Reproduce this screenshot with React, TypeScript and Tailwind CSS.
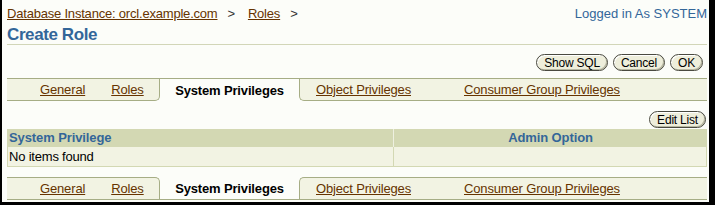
const linkCls = "text-[#663300] underline underline-offset-[1px]";
const lineCls = "border-[#a6ad85]";

function TabBar({ bottom }: { bottom?: boolean }) {
  return (
    <div
      className={`flex h-[23px] text-[13px] tracking-[-0.15px] ${lineCls} ${
        bottom ? "border-b" : "border-t"
      }`}
    >
      <div
        className={`flex w-[153px] items-center bg-[#f2f3e3] pl-[33px] border-r ${lineCls} ${
          bottom ? "border-t rounded-tr-[5px]" : "border-b rounded-br-[5px]"
        }`}
      >
        <a className={linkCls}>General</a>
        <a className={`${linkCls} ml-[26px]`}>Roles</a>
      </div>
      <div className="flex w-[139px] items-center justify-center pt-[1px] font-bold text-black">
        System Privileges
      </div>
      <div
        className={`flex flex-1 items-center bg-[#f2f3e3] pl-[16px] border-l ${lineCls} ${
          bottom ? "border-t rounded-tl-[5px]" : "border-b rounded-bl-[5px]"
        }`}
      >
        <a className={linkCls}>Object Privileges</a>
        <a className={`${linkCls} ml-[53px]`}>Consumer Group Privileges</a>
      </div>
    </div>
  );
}

function Btn({ label }: { label: string }) {
  return (
    <button className="flex h-[17px] items-center rounded-full border border-[#4a4a40] bg-[#eeeedb] px-[7px] text-[12px] leading-none tracking-[-0.2px] text-black shadow-[inset_-1px_-1px_0_#b8b8a2,inset_1px_1px_0_#ffffff]">
      {label}
    </button>
  );
}

export default function App() {
  return (
    <div className="h-[205px] w-[715px] bg-black pb-[3px] pl-[2px] pr-[6px] font-['Liberation_Sans',Arial,sans-serif]">
      <div className="h-full bg-[#fcfdf9] pl-[5px] pr-[2px] pt-[6px]">
        <div className="flex justify-between text-[13px] leading-[15px]">
          <div className="flex tracking-[-0.2px]">
            <a className={linkCls}>Database Instance: orcl.example.com</a>
            <span className="ml-[10px] text-[#333]">&gt;</span>
            <a className={`${linkCls} ml-[13px]`}>Roles</a>
            <span className="ml-[10px] text-[#333]">&gt;</span>
          </div>
          <span className="text-[#336699]">Logged in As SYSTEM</span>
        </div>

        <div className="mt-[5px] border-b border-[#d2d6b8] text-[17px] font-bold leading-[18px] tracking-[-0.4px] text-[#336699]">
          Create Role
        </div>

        <div className="mt-[9px] mr-[4px] flex justify-end gap-[5px]">
          <Btn label="Show SQL" />
          <Btn label="Cancel" />
          <Btn label="OK" />
        </div>

        <div className="mt-[7px]">
          <TabBar />
        </div>

        <div className="mt-[10px] mr-[1px] flex justify-end">
          <Btn label="Edit List" />
        </div>

        <div className="mt-[1px] flex h-[18px] bg-[#d3d8b3] text-[13px] font-bold leading-[18px] tracking-[-0.1px] text-[#336699]">
          <div className="w-[386px] pl-[2px]">System Privilege</div>
          <div className="flex-1 border-l border-[#eef0e0] text-center">Admin Option</div>
        </div>
        <div className="flex h-[20px] border-x border-b border-[#d3d8b3] bg-[#f2f3e3] text-[13px] leading-[19px] tracking-[-0.2px] text-black">
          <div className="w-[385px] pl-[1px]">No items found</div>
          <div className="flex-1 border-l border-[#d3d8b3]"></div>
        </div>

        <div className="mt-[10px]">
          <TabBar bottom />
        </div>
      </div>
    </div>
  );
}
